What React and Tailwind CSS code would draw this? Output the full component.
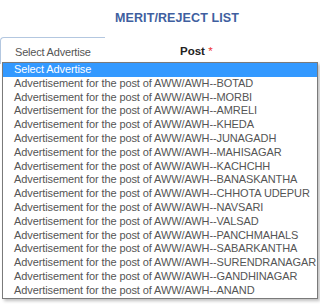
const districts = [
  'BOTAD', 'MORBI', 'AMRELI', 'KHEDA', 'JUNAGADH', 'MAHISAGAR', 'KACHCHH',
  'BANASKANTHA', 'CHHOTA UDEPUR', 'NAVSARI', 'VALSAD', 'PANCHMAHALS',
  'SABARKANTHA', 'SURENDRANAGAR', 'GANDHINAGAR', 'ANAND',
];

export default function App() {
  return (
    <div className="relative w-[320px] h-[306px] bg-white overflow-hidden" style={{ fontFamily: '"Liberation Sans", Arial, sans-serif' }}>
      <div className="pt-[11px] pl-[115px] text-[12.5px] font-bold text-[#3f5fa0] leading-[14px] tracking-[0.1px]">
        MERIT/REJECT LIST
      </div>

      {/* select + label row */}
      <div className="mt-[12px] flex items-center h-[27px]">
        <div className="w-[105px] h-full border-t border-l border-[#b3c7e0] rounded-tl-[4px] flex items-center pl-[14px] pt-[2px] text-[11px] text-[#555] tracking-[-0.2px]">
          Select Advertise
        </div>
        <div className="ml-[75px] pt-[2px] text-[11.5px] font-bold text-[#222]">
          Post <span className="text-[#e33] font-normal">*</span>
        </div>
      </div>

      {/* open dropdown */}
      <div className="absolute left-[2px] top-[62px] w-[316px] border border-[#7a7a7a] bg-white shadow-[2px_2px_3px_rgba(0,0,0,0.25)] text-[11px] leading-[13.8px] tracking-[-0.1px]">
        <div className="bg-[#3399ff] text-white pl-[11px]">Select Advertise</div>
        {districts.map((d) => (
          <div key={d} className="pl-[11px] text-[#555] whitespace-nowrap">
            Advertisement for the post of AWW/AWH--{d}
          </div>
        ))}
      </div>
    </div>
  );
}
